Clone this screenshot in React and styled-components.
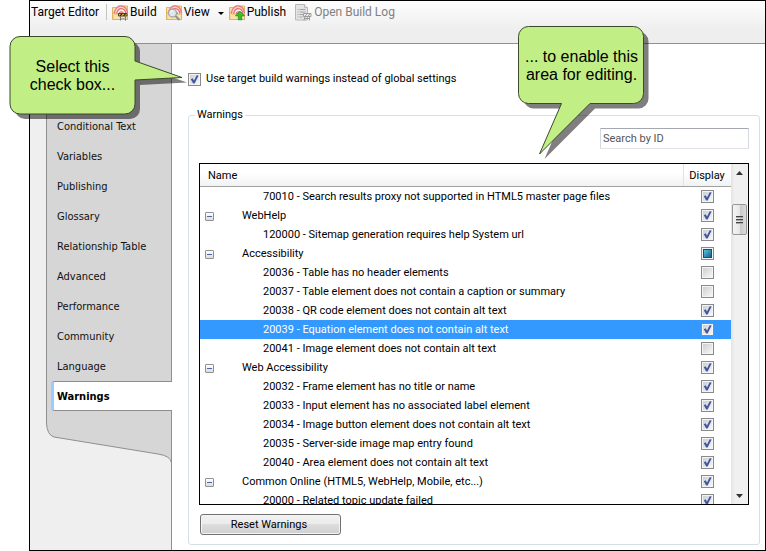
import React, { useEffect, useRef, useState } from "react";
import styled, { createGlobalStyle, css } from "styled-components";

const Global = createGlobalStyle`
  *, *::before, *::after { box-sizing: border-box; }
  body {
    margin: 0;
    background: #fff;
    color: #000;
    font: 11px/18px Roboto, "Noto Sans", sans-serif;
  }
  button, input { font: inherit; color: inherit; }
`;

const tick =
  "url(\"data:image/svg+xml,%3Csvg xmlns='http://www.w3.org/2000/svg' viewBox='0 0 13 13'%3E%3Cpath d='M2.8 6.2L4.6 5.2L6 7.4L8.7 2.2L10.6 2.4L6.6 10.6L5.2 10.6Z' fill='%233f57a0'/%3E%3C/svg%3E\")";

const Page = styled.div`
  position: relative;
  display: flex;
  height: 100vh;
  padding-left: 29px;
`;

const Frame = styled.div`
  flex: 1;
  min-width: 0;
  display: flex;
  flex-direction: column;
  border: 1px solid #000;
`;

const Toolbar = styled.header`
  height: 43px;
  flex: none;
  display: flex;
  align-items: flex-start;
  padding: 2px 1px;
  border-bottom: 1px solid #909090;
  background: linear-gradient(#fdfdfd, #eeeeee 70%);
  font-size: 12px;
  line-height: 18px;
  white-space: nowrap;
`;

const Title = styled.span`
  width: 70px;
`;

const Separator = styled.span`
  width: 1px;
  height: 16px;
  margin: 1px 5px;
  background: #c4c4c4;
`;

const ToolButton = styled.button`
  display: flex;
  align-items: center;
  gap: 2px;
  height: 18px;
  margin-right: ${(p) => p.$after || 9}px;
  padding: 0;
  border: 0;
  background: none;
  &:disabled { color: #808080; }
`;

const MenuButton = styled.button`
  display: flex;
  align-items: center;
  justify-content: center;
  width: 15px;
  height: 20px;
  padding: 0;
  border: 0;
  background: none;
`;

const Body = styled.div`
  flex: 1;
  min-height: 0;
  display: flex;
`;

const Sidebar = styled.aside`
  display: flex;
  flex-direction: column;
  width: 142px;
  flex: none;
  padding-left: 16px;
  background: linear-gradient(#8f8f8f, #8f8f8f) right / 1px 100% no-repeat #efefef;
`;

const Nav = styled.nav`
  padding: 67px 0 0 4px;
  border-left: 1px solid #8f8f8f;
  border-right: 1px solid #8f8f8f;
  background: #d6d6d6;
  font-family: "DejaVu Sans Condensed", Roboto, sans-serif;
`;

const NavLink = styled.a`
  display: block;
  height: 30px;
  padding-left: 6px;
  color: #111;
  line-height: 32px;
  text-decoration: none;
  ${(p) =>
    p.$active &&
    css`
      margin-right: -1px;
      padding-left: 3px;
      border: solid #8c8c8c;
      border-width: 1px 0;
      border-left: 3px solid #99ccff;
      border-radius: 3px 0 0 3px;
      background: #fff;
      color: #000;
      font-weight: 700;
      line-height: 30px;
    `}
`;

const Tail = styled.svg`
  display: block;
  width: 126px;
  height: 54px;
  flex: none;
`;

const Main = styled.main`
  flex: 1;
  min-width: 0;
  display: flex;
  flex-direction: column;
  padding: 26px 5px 5px 16px;
`;

const OptionLabel = styled.label`
  display: flex;
  align-items: center;
  gap: 5px;
  height: 18px;
  align-self: flex-start;
`;

const Checkbox = styled.input.attrs({ type: "checkbox" })`
  appearance: none;
  display: block;
  flex: none;
  width: 13px;
  height: 13px;
  margin: ${(p) => (p.$centered ? "0 auto" : "0")};
  border: 1px solid #8a8a8a;
  background: linear-gradient(135deg, #cdcfd3, #f6f6f6) center / 9px 9px no-repeat #f4f4f4;
  &:checked {
    background: ${tick} center / 13px 13px no-repeat,
      linear-gradient(135deg, #cdcfd3, #f6f6f6) center / 9px 9px no-repeat #f4f4f4;
  }
  &:indeterminate {
    background: linear-gradient(135deg, #5cc4e0, #14618f) center / 7px 7px no-repeat,
      linear-gradient(#164e78, #164e78) center / 9px 9px no-repeat #f4f4f4;
  }
`;

const Group = styled.fieldset`
  flex: 1;
  min-height: 0;
  min-width: 0;
  display: flex;
  flex-direction: column;
  margin: 18px 0 0;
  padding: 4px 10px 9px;
  border: 1px solid #d5dfe5;
  border-radius: 3px;
`;

const Legend = styled.legend`
  margin-left: -4px;
  padding: 0 2px;
`;

const Content = styled.div`
  display: flex;
  flex-direction: column;
  height: 100%;
  min-height: 0;
`;

const Search = styled.input`
  align-self: flex-end;
  flex: none;
  width: 149px;
  height: 21px;
  margin: 0 0 14px;
  padding: 0 2px;
  border: 1px solid #e0e4ea;
  border-top-color: #a5a8b0;
  border-left-color: #d5d8de;
  border-right-color: #d5d8de;
  border-radius: 1px;
  &::placeholder { color: #555; opacity: 1; }
`;

const ListBox = styled.div`
  flex: 1;
  min-height: 0;
  display: flex;
  border: 1px solid #000;
`;

const Viewport = styled.div`
  flex: 1;
  min-width: 0;
  overflow: hidden;
`;

const Table = styled.table`
  width: 100%;
  border-collapse: separate;
  border-spacing: 0;
  table-layout: fixed;
`;

const HeadCell = styled.th`
  width: ${(p) => p.$width || "auto"};
  height: 23px;
  padding: ${(p) => (p.$width ? "2px 0 0" : "2px 8px 0")};
  border-bottom: 1px solid #a0a0a0;
  background: linear-gradient(#fff 40%, #f1f2f4);
  box-shadow: inset ${(p) => (p.$width ? "1px" : "0")} 0 #dfe2e6;
  font-weight: 400;
  text-align: ${(p) => (p.$width ? "center" : "left")};
`;

const Row = styled.tr`
  height: 19px;
  line-height: 18px;
  ${(p) =>
    p.$selected &&
    css`
      background: #3399ff;
      color: #fff;
    `}
`;

const Cell = styled.td`
  padding: 0;
  white-space: nowrap;
`;

const NameBox = styled.div`
  display: flex;
  align-items: center;
  height: 19px;
  padding-top: 1px;
  padding-left: ${(p) => (p.$child ? 63 : 5)}px;
`;

const Expander = styled.button`
  display: flex;
  align-items: center;
  justify-content: center;
  width: 9px;
  height: 9px;
  margin-right: 28px;
  padding: 0;
  border: 1px solid #919191;
  border-radius: 1px;
  background: linear-gradient(#fff, #dcdcdc);
  &::before {
    content: "";
    width: 5px;
    height: 1px;
    background: #4b63a7;
  }
`;

const ScrollBar = styled.div`
  display: flex;
  flex-direction: column;
  align-items: center;
  justify-content: space-between;
  width: 17px;
  background: linear-gradient(90deg, #e3e3e3, #f0f0f0 20%);
`;

const ScrollTop = styled.div`
  display: flex;
  flex-direction: column;
  align-items: center;
`;

const ScrollButton = styled.button`
  display: flex;
  align-items: center;
  justify-content: center;
  width: 17px;
  height: 17px;
  padding: 0;
  border: 0;
  background: none;
`;

const Thumb = styled.div`
  display: flex;
  flex-direction: column;
  align-items: center;
  justify-content: center;
  gap: 1px;
  width: 15px;
  height: 31px;
  margin-top: 23px;
  border: 1px solid #979797;
  border-radius: 2px;
  background: linear-gradient(90deg, #f5f5f5, #e6e6e8 50%, #c8c9cc 55%, #dcdcdc);
`;

const Grip = styled.span`
  width: 7px;
  height: 2px;
  border-top: 1px solid #444;
  border-bottom: 1px solid #aaa;
`;

const ResetButton = styled.button`
  align-self: flex-start;
  flex: none;
  width: 141px;
  height: 21px;
  margin: 9px 0 0 1px;
  padding: 1px 3px 0 0;
  border: 1px solid #707070;
  border-radius: 3px;
  background: linear-gradient(#f2f2f2, #ebebeb 50%, #dddddd 50%, #cfcfcf);
  box-shadow: inset 0 0 0 1px #f6f6f6;
  line-height: 18px;
`;

const Callout = styled.div`
  position: absolute;
  left: ${(p) => p.$left};
  top: ${(p) => p.$top};
  width: 127px;
  height: 79px;
  display: flex;
  align-items: center;
  justify-content: center;
  font: 16px/18px "Liberation Sans", Arial, sans-serif;
  text-align: center;
  white-space: pre-line;
`;

const Bubble = styled.svg`
  position: absolute;
  left: 0;
  top: 0;
  overflow: visible;
`;

const CalloutText = styled.p`
  position: relative;
  margin: 0;
`;

function FolderBase() {
  return (
    <>
      <path d="M.5 3.500h5l1-1.500h9v13.500H.5z" fill="#f8dfa6" stroke="#d9a652" strokeWidth=".8" />
      <path d="M2.500 10a6 7 0 0 1 13-1" fill="#fbd0cf" stroke="#e9797c" strokeWidth="1.200" />
      <path d="M4.800 10a4 4.600 0 0 1 9-.500" fill="#fdf0ee" stroke="#e8696e" strokeWidth="1.200" />
      <path d="M7 10a2.200 2.300 0 0 1 4.600 0z" fill="#f3a5a3" stroke="#e4575d" strokeWidth=".8" />
      <path d="M.8 15.500V8l2 2h12.700v5.500z" fill="#fae2a6" stroke="#d9a855" strokeWidth=".7" />
    </>
  );
}

function ToolIcon({ kind }) {
  if (kind === "log") {
    return (
      <svg width="17" height="17" viewBox="0 0 17 17" fill="none" aria-hidden="true">
        <path d="M.5 .5h9l3 3v12.500h-12z" fill="#e4e4e4" stroke="#b8b8b8" />
        <path d="M9.500 .5v3h3" fill="#f4f4f4" stroke="#b8b8b8" />
        <path d="M2.500 5.500h1m1 0h6m-8 2.500h1m1 0h6m-8 2.500h1m1 0h4m-6 2.500h1m1 0h3" stroke="#a2a2a2" />
        <path d="M8.500 9.500h7.500v3H8.500z" fill="#eee" stroke="#9c9c9c" />
        <path d="M10 12l2-2M13 12l2-2M10 12.500l-1 4M14.500 12.500v4M9.500 14.500h5" stroke="#9c9c9c" />
      </svg>
    );
  }
  return (
    <svg width="16" height="17" viewBox="0 0 16 17" fill="none" aria-hidden="true">
      <FolderBase />
      {kind === "build" && (
        <>
          <path d="M6.500 9.500h8.500v2.500H6.500z" fill="#f3bd3c" stroke="#3b3526" strokeWidth=".9" />
          <path d="M8 11.800l2-2M11.500 11.800l2-2" stroke="#29251c" strokeWidth="1.200" />
          <path d="M8.500 12.500v4M13.500 12.500v4" stroke="#6b6b6b" />
          <path d="M8.500 14.500h5" stroke="#a9a9a9" />
        </>
      )}
      {kind === "view" && (
        <>
          <circle cx="6.500" cy="9" r="4" fill="#dfe7ee" stroke="#a2a7ab" strokeWidth="1.300" />
          <path d="M9.500 12l4 4" stroke="#8d8f91" strokeWidth="2" />
          <path d="M4.500 8.500a2.200 2.200 0 0 1 2-1.700" stroke="#fff" />
        </>
      )}
      {kind === "publish" && (
        <path d="M11 7.200l4.500 4.600h-2.800v4H9.300v-4H6.500z" fill="#35c02c" stroke="#16901a" strokeWidth=".8" />
      )}
    </svg>
  );
}

function Triangle({ up }) {
  return (
    <svg width="7" height="4" viewBox="0 0 7 4" aria-hidden="true">
      <path d={up ? "M0 4L3.500 0L7 4z" : "M0 0h7L3.500 4z"} fill="#333" />
    </svg>
  );
}

const navItems = [
  "Conditional Text",
  "Variables",
  "Publishing",
  "Glossary",
  "Relationship Table",
  "Advanced",
  "Performance",
  "Community",
  "Language",
  "Warnings",
];

const initialRows = [
  { name: "70010 - Search results proxy not supported in HTML5 master page files", display: true },
  { name: "WebHelp", group: true, display: true },
  { name: "120000 - Sitemap generation requires help System url", display: true },
  { name: "Accessibility", group: true, display: "mixed" },
  { name: "20036 - Table has no header elements", display: false },
  { name: "20037 - Table element does not contain a caption or summary", display: false },
  { name: "20038 - QR code element does not contain alt text", display: true },
  { name: "20039 - Equation element does not contain alt text", display: true },
  { name: "20041 - Image element does not contain alt text", display: false },
  { name: "Web Accessibility", group: true, display: true },
  { name: "20032 - Frame element has no title or name", display: true },
  { name: "20033 - Input element has no associated label element", display: true },
  { name: "20034 - Image button element does not contain alt text", display: true },
  { name: "20035 - Server-side image map entry found", display: true },
  { name: "20040 - Area element does not contain alt text", display: true },
  { name: "Common Online (HTML5, WebHelp, Mobile, etc...)", group: true, display: true },
  { name: "20000 - Related topic update failed", display: true },
];

function DisplayBox({ row, onChange }) {
  const ref = useRef(null);
  useEffect(() => {
    ref.current.indeterminate = row.display === "mixed";
  }, [row.display]);
  return (
    <Checkbox
      ref={ref}
      $centered
      aria-label={`Display ${row.name}`}
      checked={row.display === true}
      onChange={onChange}
    />
  );
}

function WarningList() {
  const [rows, setRows] = useState(initialRows);
  const [selected, setSelected] = useState(7);
  const toggle = (index) =>
    setRows(rows.map((r, i) => (i === index ? { ...r, display: r.display !== true } : r)));
  return (
    <ListBox>
      <Viewport>
        <Table>
          <thead>
            <tr>
              <HeadCell scope="col">Name</HeadCell>
              <HeadCell scope="col" $width="48px">Display</HeadCell>
            </tr>
          </thead>
          <tbody>
            {rows.map((row, i) => (
              <Row key={row.name} $selected={i === selected} onClick={() => setSelected(i)}>
                <Cell>
                  <NameBox $child={!row.group}>
                    {row.group && <Expander type="button" aria-label={`Collapse ${row.name}`} />}
                    {row.name}
                  </NameBox>
                </Cell>
                <Cell>
                  <DisplayBox row={row} onChange={() => toggle(i)} />
                </Cell>
              </Row>
            ))}
          </tbody>
        </Table>
      </Viewport>
      <ScrollBar>
        <ScrollTop>
          <ScrollButton type="button" aria-label="Scroll up"><Triangle up /></ScrollButton>
          <Thumb><Grip /><Grip /><Grip /></Thumb>
        </ScrollTop>
        <ScrollButton type="button" aria-label="Scroll down"><Triangle /></ScrollButton>
      </ScrollBar>
    </ListBox>
  );
}

const selectPath =
  "M11 .5H116a10 10 0 0 1 10 10V25L173 41.500L126 44V68a10 10 0 0 1-10 10H11a10 10 0 0 1-10-10V10.500a10 10 0 0 1 10-10z";
const enablePath =
  "M10.500 .5H115.500a10 10 0 0 1 10 10V67.500a10 10 0 0 1-10 10H72L21.500 128L43.500 77.500H10.500a10 10 0 0 1-10-10V10.500a10 10 0 0 1 10-10z";

function Note({ left, top, path, children }) {
  return (
    <Callout $left={left} $top={top}>
      <Bubble width="126" height="79" aria-hidden="true">
        <path d={path} transform="translate(5 5)" fill="#000" fillOpacity=".5" />
        <path d={path} fill="#c1ee85" stroke="#3c4a2a" />
      </Bubble>
      <CalloutText>{children}</CalloutText>
    </Callout>
  );
}

export default function App() {
  const [enabled, setEnabled] = useState(true);
  return (
    <Page>
      <Global />
      <Frame>
        <Toolbar>
          <Title>Target Editor</Title>
          <Separator />
          <ToolButton type="button"><ToolIcon kind="build" />Build</ToolButton>
          <ToolButton type="button" $after={4}><ToolIcon kind="view" />View</ToolButton>
          <MenuButton type="button" aria-label="View options">
            <svg width="6" height="3" viewBox="0 0 6 3" aria-hidden="true"><path d="M0 0h6L3 3z" /></svg>
          </MenuButton>
          <ToolButton type="button"><ToolIcon kind="publish" />Publish</ToolButton>
          <ToolButton type="button" disabled><ToolIcon kind="log" />Open Build Log</ToolButton>
        </Toolbar>
        <Body>
          <Sidebar>
            <Nav>
              {navItems.map((item) => (
                <NavLink key={item} href="#" $active={item === "Warnings"}>{item}</NavLink>
              ))}
            </Nav>
            <Tail viewBox="0 0 126 54" aria-hidden="true">
              <path d="M.5 0V12Q1 24 8 26L112 43Q125 45 125.500 52V0" fill="#d6d6d6" />
              <path d="M.5 0V12Q1 24 8 26L112 43Q125 45 125.500 52V0" fill="none" stroke="#8f8f8f" />
            </Tail>
          </Sidebar>
          <Main>
            <OptionLabel>
              <Checkbox checked={enabled} onChange={(e) => setEnabled(e.target.checked)} />
              Use target build warnings instead of global settings
            </OptionLabel>
            <Group>
              <Legend>Warnings</Legend>
              <Content>
                <Search placeholder="Search by ID" aria-label="Search by ID" />
                <WarningList />
                <ResetButton type="button">Reset Warnings</ResetButton>
              </Content>
            </Group>
          </Main>
        </Body>
      </Frame>
      <Note left="9px" top="36px" path={selectPath}>{"Select this\ncheck box..."}</Note>
      <Note left="518px" top="26px" path={enablePath}>{"... to enable this\narea for editing."}</Note>
    </Page>
  );
}
